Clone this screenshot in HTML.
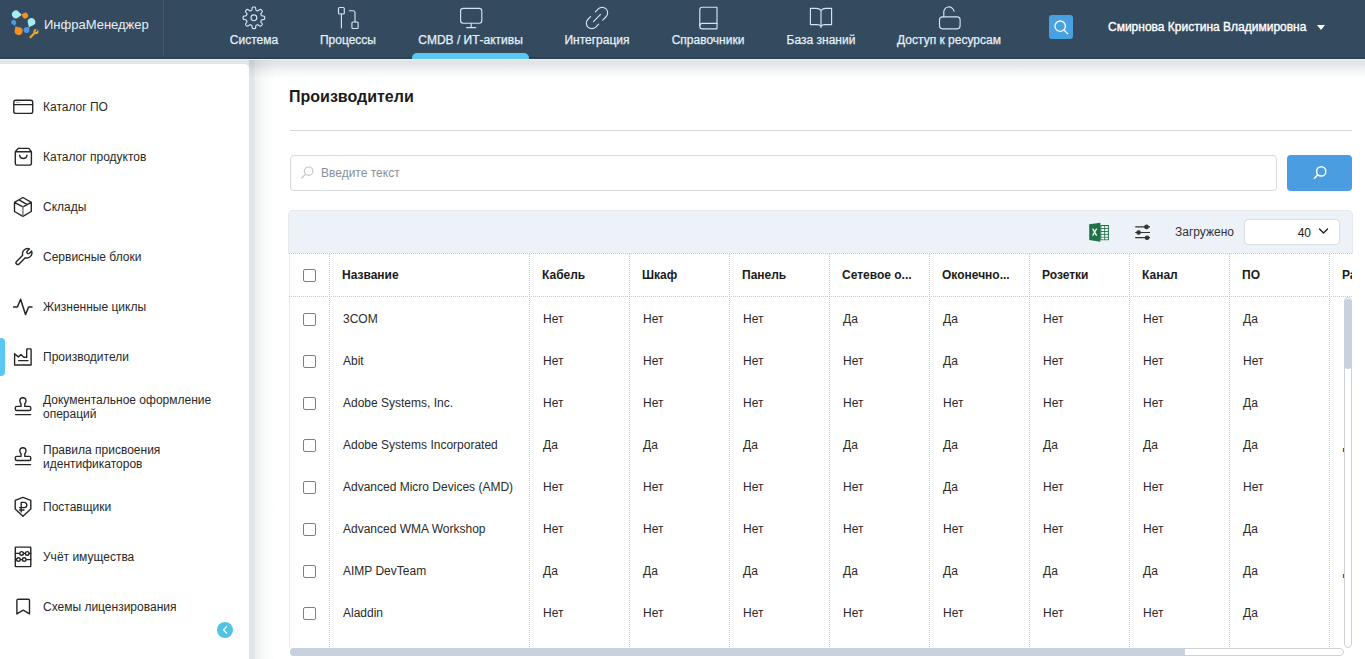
<!DOCTYPE html>
<html><head><meta charset="utf-8">
<style>
*{box-sizing:border-box;margin:0;padding:0}
html,body{width:1365px;height:659px;overflow:hidden}
body{font-family:"Liberation Sans",sans-serif;background:#e1e5e8;position:relative;color:#222}
.hdr{position:absolute;left:0;top:0;width:1365px;height:59px;background:#344a5e}
.hsep{position:absolute;left:163px;top:0;width:1px;height:56px;background:#485c70;box-shadow:1px 0 0 #304457}
.logo-t{position:absolute;left:44px;top:17px;font-size:13px;color:#e6f0f8}
.nav{position:absolute;top:0;height:59px;text-align:center;color:#e3f0fa;font-size:12px;-webkit-text-stroke:0.25px #e3f0fa}
.nav .lbl{position:absolute;left:0;right:0;top:33px;white-space:nowrap}
.nav svg{position:absolute;left:50%;top:6px;transform:translateX(-50%)}
.ul{position:absolute;left:412px;top:53px;width:117px;height:6px;background:#5ac8f2;border-radius:5px 5px 0 0}
.sbtn{position:absolute;left:1049px;top:15px;width:24px;height:24px;background:#4aa1e2;border-radius:3px}
.uname{position:absolute;left:1108px;top:20px;font-size:12px;font-weight:400;color:#fff;-webkit-text-stroke:0.35px #fff;white-space:nowrap}
.caret{position:absolute;left:1317px;top:25px;width:0;height:0;border-left:4px solid transparent;border-right:4px solid transparent;border-top:5px solid #fff}
.side{position:absolute;left:0;top:64px;width:249px;height:600px;background:#fff;border-radius:0 5px 0 0}
.si{position:absolute;left:0;width:249px;height:40px}
.si .t{position:absolute;left:43px;font-size:12px;color:#222;line-height:14px}
.si svg{position:absolute;left:12px}
.act{position:absolute;left:0;top:338px;width:5px;height:38px;background:#5ac8f2;border-radius:0 4px 4px 0}
.st{position:absolute;left:43px;font-size:12px;line-height:14px;color:#292929;white-space:nowrap}
.coll{position:absolute;left:217px;top:622px;width:16px;height:16px;border-radius:50%;background:#50c3e6}
.main{position:absolute;left:249px;top:59px;width:1116px;height:600px;background:#fff}
.gl{position:absolute;left:249px;top:59px;width:26px;height:600px;background:linear-gradient(to right,rgba(20,45,65,.125) 0,rgba(20,45,65,.12) 5px,rgba(20,60,90,.08) 6px,rgba(20,45,65,.07) 8px,rgba(20,45,65,.035) 14px,rgba(20,45,65,0) 26px)}
.gt{position:absolute;left:249px;top:59px;width:1116px;height:20px;background:linear-gradient(rgba(20,45,65,.13) 0,rgba(20,45,65,.12) 5px,rgba(20,45,65,.055) 11px,rgba(20,45,65,0) 19px)}
.gtl{position:absolute;left:0;top:59px;width:1365px;height:1px;background:#e8f1f8}
.gc{position:absolute;left:249px;top:59px;width:24px;height:20px;background:linear-gradient(135deg,#e0e4e7 0,#e6e9eb 40%,rgba(255,255,255,0) 100%)}
.hdb{position:absolute;left:0;top:57px;width:1365px;height:2px;background:#2d3f51}
.title{position:absolute;left:289px;top:88px;font-size:16px;font-weight:700;color:#1b1b1b}
.hr{position:absolute;left:290px;top:130px;width:1062px;height:1px;background:#d3d7dc}
.inp{position:absolute;left:290px;top:155px;width:987px;height:36px;border:1px solid #d6dadf;border-radius:4px;background:#fff}
.ph{position:absolute;left:321px;top:166px;font-size:12px;color:#8a8f96}
.gbtn{position:absolute;left:1287px;top:155px;width:65px;height:36px;background:#4a9de0;border-radius:4px}
.tb{position:absolute;left:288px;top:210px;width:1065px;height:44px;background:#edf2f9;border:1px solid #e5e9ee;border-bottom:none;border-radius:5px 5px 0 0}
.zag{position:absolute;left:1175px;top:225px;font-size:12px;color:#333}
.sel{position:absolute;left:1244px;top:219px;width:96px;height:26px;background:#fff;border:1px solid #d9dee4;border-radius:4px}
.sel span{position:absolute;right:28px;top:6px;font-size:12px;color:#222}
.grid{position:absolute;left:289px;top:253px;width:1063px;height:395px;overflow:hidden;background:#fff;box-shadow:inset 1px 0 0 #e7ebf0}
.hl{position:absolute;left:0;width:1063px;height:0;border-top:1px dotted #c4c8ce}
.vl{position:absolute;top:0;width:0;height:394px;border-left:1px dotted #c4c8ce}
.th,.td{position:absolute;font-size:12px;line-height:14px;white-space:nowrap;color:#2a2a2a}
..hl{position:absolute;left:0;width:1063px;height:0;border-top:1px dotted #c4c8ce}
.vl{position:absolute;top:0;width:0;height:394px;border-left:1px dotted #c4c8ce}
.th,.td{position:absolute;font-size:12px;line-height:14px;white-space:nowrap;color:#2a2a2a}
..hl{position:absolute;left:0;width:1063px;height:0;border-top:1px dotted #c4c8ce}
.vl{position:absolute;top:0;width:0;height:394px;border-left:1px dotted #c4c8ce}
.th,.td{position:absolute;font-size:12px;line-height:14px;white-space:nowrap;color:#2a2a2a}
.th{font-weight:700;color:#1b1b1b}
.cb{position:absolute;width:13px;height:13px;border:1px solid #7c8086;border-radius:2px;background:#fff}
.vs{position:absolute;left:1344px;top:297px;width:8px;height:351px;border:1px solid #cdd2d8;border-radius:4px;background:#fff;z-index:3}
.vs i{position:absolute;left:-1px;top:1px;width:8px;height:70px;background:#c7d2de;border-radius:4px}
.hs{position:absolute;left:290px;top:648px;width:1054px;height:8px;border:1px solid #cdd2d8;border-radius:4px;background:#fff;z-index:3}
.hs i{position:absolute;left:-1px;top:-1px;width:895px;height:8px;background:#c7d2de;border-radius:4px 0 0 4px}
.ov{position:absolute;left:0;top:0;z-index:5}
</style></head><body>
<div class="hdr"></div>
<div class="hsep"></div><div class="hdb"></div>
<div class="logo-t">ИнфраМенеджер</div>

<div class="nav" style="left:214px;width:80px"><div class="lbl">Система</div></div>
<div class="nav" style="left:303px;width:90px"><div class="lbl">Процессы</div></div>
<div class="nav" style="left:412px;width:117px"><div class="lbl">CMDB / ИТ-активы</div></div>
<div class="nav" style="left:547px;width:100px"><div class="lbl">Интеграция</div></div>
<div class="nav" style="left:658px;width:100px"><div class="lbl">Справочники</div></div>
<div class="nav" style="left:771px;width:100px"><div class="lbl">База знаний</div></div>
<div class="nav" style="left:884px;width:130px"><div class="lbl">Доступ к ресурсам</div></div>
<div class="ul"></div>
<div class="sbtn"></div>
<div class="uname">Смирнова Кристина Владимировна</div>
<div class="caret"></div>

<div class="main"></div><div class="gt"></div><div class="gl"></div><div class="gtl"></div>
<div class="side"></div>
<div class="act"></div>
<div class="coll"></div>
<div class="st" style="top:100px">Каталог ПО</div>
<div class="st" style="top:150px">Каталог продуктов</div>
<div class="st" style="top:200px">Склады</div>
<div class="st" style="top:250px">Сервисные блоки</div>
<div class="st" style="top:300px">Жизненные циклы</div>
<div class="st" style="top:350px">Производители</div>
<div class="st" style="top:393px">Документальное оформление<br>операций</div>
<div class="st" style="top:443px">Правила присвоения<br>идентификаторов</div>
<div class="st" style="top:500px">Поставщики</div>
<div class="st" style="top:550px">Учёт имущества</div>
<div class="st" style="top:600px">Схемы лицензирования</div>

<div class="title">Производители</div>
<div class="hr"></div>
<div class="inp"></div>
<div class="ph">Введите текст</div>
<div class="gbtn"></div>
<div class="tb"></div>
<div class="zag">Загружено</div>
<div class="sel"><span>40</span></div>
<div class="grid" id="grid">
<div class="hl" style="top:0"></div><div class="hl" style="top:43px"></div>
<div class="vl" style="left:40px"></div>
<div class="vl" style="left:240px"></div>
<div class="vl" style="left:340px"></div>
<div class="vl" style="left:440px"></div>
<div class="vl" style="left:540px"></div>
<div class="vl" style="left:640px"></div>
<div class="vl" style="left:740px"></div>
<div class="vl" style="left:840px"></div>
<div class="vl" style="left:940px"></div>
<div class="vl" style="left:1040px"></div>
<span class="cb" style="left:14px;top:16px"></span>
<div class="th" style="left:53px;top:15px">Название</div>
<div class="th" style="left:253px;top:15px">Кабель</div>
<div class="th" style="left:353px;top:15px">Шкаф</div>
<div class="th" style="left:453px;top:15px">Панель</div>
<div class="th" style="left:553px;top:15px">Сетевое о...</div>
<div class="th" style="left:653px;top:15px">Оконечно...</div>
<div class="th" style="left:753px;top:15px">Розетки</div>
<div class="th" style="left:853px;top:15px">Канал</div>
<div class="th" style="left:953px;top:15px">ПО</div>
<div class="th" style="left:1053px;top:15px">Ра</div>
<span class="cb" style="left:14px;top:60px"></span>
<div class="td" style="left:54px;top:59px">3COM</div>
<div class="td" style="left:254px;top:59px">Нет</div>
<div class="td" style="left:354px;top:59px">Нет</div>
<div class="td" style="left:454px;top:59px">Нет</div>
<div class="td" style="left:554px;top:59px">Да</div>
<div class="td" style="left:654px;top:59px">Да</div>
<div class="td" style="left:754px;top:59px">Нет</div>
<div class="td" style="left:854px;top:59px">Нет</div>
<div class="td" style="left:954px;top:59px">Да</div>
<div class="td" style="left:1054px;top:59px"></div>
<span class="cb" style="left:14px;top:102px"></span>
<div class="td" style="left:54px;top:101px">Abit</div>
<div class="td" style="left:254px;top:101px">Нет</div>
<div class="td" style="left:354px;top:101px">Нет</div>
<div class="td" style="left:454px;top:101px">Нет</div>
<div class="td" style="left:554px;top:101px">Нет</div>
<div class="td" style="left:654px;top:101px">Да</div>
<div class="td" style="left:754px;top:101px">Нет</div>
<div class="td" style="left:854px;top:101px">Нет</div>
<div class="td" style="left:954px;top:101px">Нет</div>
<div class="td" style="left:1054px;top:101px"></div>
<span class="cb" style="left:14px;top:144px"></span>
<div class="td" style="left:54px;top:143px">Adobe Systems, Inc.</div>
<div class="td" style="left:254px;top:143px">Нет</div>
<div class="td" style="left:354px;top:143px">Нет</div>
<div class="td" style="left:454px;top:143px">Нет</div>
<div class="td" style="left:554px;top:143px">Нет</div>
<div class="td" style="left:654px;top:143px">Нет</div>
<div class="td" style="left:754px;top:143px">Нет</div>
<div class="td" style="left:854px;top:143px">Нет</div>
<div class="td" style="left:954px;top:143px">Да</div>
<div class="td" style="left:1054px;top:143px"></div>
<span class="cb" style="left:14px;top:186px"></span>
<div class="td" style="left:54px;top:185px">Adobe Systems Incorporated</div>
<div class="td" style="left:254px;top:185px">Да</div>
<div class="td" style="left:354px;top:185px">Да</div>
<div class="td" style="left:454px;top:185px">Да</div>
<div class="td" style="left:554px;top:185px">Да</div>
<div class="td" style="left:654px;top:185px">Да</div>
<div class="td" style="left:754px;top:185px">Да</div>
<div class="td" style="left:854px;top:185px">Да</div>
<div class="td" style="left:954px;top:185px">Да</div>
<div class="td" style="left:1054px;top:185px">Да</div>
<span class="cb" style="left:14px;top:228px"></span>
<div class="td" style="left:54px;top:227px">Advanced Micro Devices (AMD)</div>
<div class="td" style="left:254px;top:227px">Нет</div>
<div class="td" style="left:354px;top:227px">Нет</div>
<div class="td" style="left:454px;top:227px">Нет</div>
<div class="td" style="left:554px;top:227px">Нет</div>
<div class="td" style="left:654px;top:227px">Да</div>
<div class="td" style="left:754px;top:227px">Нет</div>
<div class="td" style="left:854px;top:227px">Нет</div>
<div class="td" style="left:954px;top:227px">Нет</div>
<div class="td" style="left:1054px;top:227px"></div>
<span class="cb" style="left:14px;top:270px"></span>
<div class="td" style="left:54px;top:269px">Advanced WMA Workshop</div>
<div class="td" style="left:254px;top:269px">Нет</div>
<div class="td" style="left:354px;top:269px">Нет</div>
<div class="td" style="left:454px;top:269px">Нет</div>
<div class="td" style="left:554px;top:269px">Нет</div>
<div class="td" style="left:654px;top:269px">Нет</div>
<div class="td" style="left:754px;top:269px">Нет</div>
<div class="td" style="left:854px;top:269px">Нет</div>
<div class="td" style="left:954px;top:269px">Да</div>
<div class="td" style="left:1054px;top:269px"></div>
<span class="cb" style="left:14px;top:312px"></span>
<div class="td" style="left:54px;top:311px">AIMP DevTeam</div>
<div class="td" style="left:254px;top:311px">Да</div>
<div class="td" style="left:354px;top:311px">Да</div>
<div class="td" style="left:454px;top:311px">Да</div>
<div class="td" style="left:554px;top:311px">Да</div>
<div class="td" style="left:654px;top:311px">Да</div>
<div class="td" style="left:754px;top:311px">Да</div>
<div class="td" style="left:854px;top:311px">Да</div>
<div class="td" style="left:954px;top:311px">Да</div>
<div class="td" style="left:1054px;top:311px">Да</div>
<span class="cb" style="left:14px;top:354px"></span>
<div class="td" style="left:54px;top:353px">Aladdin</div>
<div class="td" style="left:254px;top:353px">Нет</div>
<div class="td" style="left:354px;top:353px">Нет</div>
<div class="td" style="left:454px;top:353px">Нет</div>
<div class="td" style="left:554px;top:353px">Нет</div>
<div class="td" style="left:654px;top:353px">Нет</div>
<div class="td" style="left:754px;top:353px">Нет</div>
<div class="td" style="left:854px;top:353px">Нет</div>
<div class="td" style="left:954px;top:353px">Да</div>
<div class="td" style="left:1054px;top:353px"></div>
</div>
<div class="vs"><i></i></div>
<div class="hs"><i></i></div>
<svg class="ov" width="1365" height="659" viewBox="0 0 1365 659">
<g fill="none" stroke="#d3e4f2" stroke-width="1.15" stroke-linecap="round" stroke-linejoin="round">
<path d="M253.90 6.95 L254.11 6.95 L254.33 6.97 L254.54 6.99 L254.75 7.03 L254.95 7.10 L255.15 7.21 L255.34 7.39 L255.50 7.69 L255.63 8.13 L255.71 8.68 L255.78 9.23 L255.85 9.67 L255.94 9.97 L256.05 10.16 L256.18 10.29 L256.31 10.38 L256.45 10.46 L256.59 10.52 L256.73 10.58 L256.87 10.64 L257.01 10.70 L257.15 10.75 L257.29 10.81 L257.44 10.85 L257.60 10.88 L257.78 10.88 L257.99 10.82 L258.27 10.67 L258.63 10.41 L259.07 10.07 L259.52 9.74 L259.92 9.52 L260.24 9.42 L260.50 9.42 L260.72 9.49 L260.91 9.59 L261.09 9.71 L261.26 9.84 L261.42 9.98 L261.57 10.13 L261.72 10.28 L261.86 10.44 L261.99 10.61 L262.11 10.79 L262.21 10.98 L262.28 11.20 L262.28 11.46 L262.18 11.78 L261.96 12.18 L261.63 12.63 L261.29 13.07 L261.03 13.43 L260.88 13.71 L260.82 13.92 L260.82 14.10 L260.85 14.26 L260.89 14.41 L260.95 14.55 L261.00 14.69 L261.06 14.83 L261.12 14.97 L261.18 15.11 L261.24 15.25 L261.32 15.39 L261.41 15.52 L261.54 15.65 L261.73 15.76 L262.03 15.85 L262.47 15.92 L263.02 15.99 L263.57 16.07 L264.01 16.20 L264.31 16.36 L264.49 16.55 L264.60 16.75 L264.67 16.95 L264.71 17.16 L264.73 17.37 L264.75 17.59 L264.75 17.80 L264.75 18.01 L264.73 18.23 L264.71 18.44 L264.67 18.65 L264.60 18.85 L264.49 19.05 L264.31 19.24 L264.01 19.40 L263.57 19.53 L263.02 19.61 L262.47 19.68 L262.03 19.75 L261.73 19.84 L261.54 19.95 L261.41 20.08 L261.32 20.21 L261.24 20.35 L261.18 20.49 L261.12 20.63 L261.06 20.77 L261.00 20.91 L260.95 21.05 L260.89 21.19 L260.85 21.34 L260.82 21.50 L260.82 21.68 L260.88 21.89 L261.03 22.17 L261.29 22.53 L261.63 22.97 L261.96 23.42 L262.18 23.82 L262.28 24.14 L262.28 24.40 L262.21 24.62 L262.11 24.81 L261.99 24.99 L261.86 25.16 L261.72 25.32 L261.57 25.47 L261.42 25.62 L261.26 25.76 L261.09 25.89 L260.91 26.01 L260.72 26.11 L260.50 26.18 L260.24 26.18 L259.92 26.08 L259.52 25.86 L259.07 25.53 L258.63 25.19 L258.27 24.93 L257.99 24.78 L257.78 24.72 L257.60 24.72 L257.44 24.75 L257.29 24.79 L257.15 24.85 L257.01 24.90 L256.87 24.96 L256.73 25.02 L256.59 25.08 L256.45 25.14 L256.31 25.22 L256.18 25.31 L256.05 25.44 L255.94 25.63 L255.85 25.93 L255.78 26.37 L255.71 26.92 L255.63 27.47 L255.50 27.91 L255.34 28.21 L255.15 28.39 L254.95 28.50 L254.75 28.57 L254.54 28.61 L254.33 28.63 L254.11 28.65 L253.90 28.65 L253.69 28.65 L253.47 28.63 L253.26 28.61 L253.05 28.57 L252.85 28.50 L252.65 28.39 L252.46 28.21 L252.30 27.91 L252.17 27.47 L252.09 26.92 L252.02 26.37 L251.95 25.93 L251.86 25.63 L251.75 25.44 L251.62 25.31 L251.49 25.22 L251.35 25.14 L251.21 25.08 L251.07 25.02 L250.93 24.96 L250.79 24.90 L250.65 24.85 L250.51 24.79 L250.36 24.75 L250.20 24.72 L250.02 24.72 L249.81 24.78 L249.53 24.93 L249.17 25.19 L248.73 25.53 L248.28 25.86 L247.88 26.08 L247.56 26.18 L247.30 26.18 L247.08 26.11 L246.89 26.01 L246.71 25.89 L246.54 25.76 L246.38 25.62 L246.23 25.47 L246.08 25.32 L245.94 25.16 L245.81 24.99 L245.69 24.81 L245.59 24.62 L245.52 24.40 L245.52 24.14 L245.62 23.82 L245.84 23.42 L246.17 22.97 L246.51 22.53 L246.77 22.17 L246.92 21.89 L246.98 21.68 L246.98 21.50 L246.95 21.34 L246.91 21.19 L246.85 21.05 L246.80 20.91 L246.74 20.77 L246.68 20.63 L246.62 20.49 L246.56 20.35 L246.48 20.21 L246.39 20.08 L246.26 19.95 L246.07 19.84 L245.77 19.75 L245.33 19.68 L244.78 19.61 L244.23 19.53 L243.79 19.40 L243.49 19.24 L243.31 19.05 L243.20 18.85 L243.13 18.65 L243.09 18.44 L243.07 18.23 L243.05 18.01 L243.05 17.80 L243.05 17.59 L243.07 17.37 L243.09 17.16 L243.13 16.95 L243.20 16.75 L243.31 16.55 L243.49 16.36 L243.79 16.20 L244.23 16.07 L244.78 15.99 L245.33 15.92 L245.77 15.85 L246.07 15.76 L246.26 15.65 L246.39 15.52 L246.48 15.39 L246.56 15.25 L246.62 15.11 L246.68 14.97 L246.74 14.83 L246.80 14.69 L246.85 14.55 L246.91 14.41 L246.95 14.26 L246.98 14.10 L246.98 13.92 L246.92 13.71 L246.77 13.43 L246.51 13.07 L246.17 12.63 L245.84 12.18 L245.62 11.78 L245.52 11.46 L245.52 11.20 L245.59 10.98 L245.69 10.79 L245.81 10.61 L245.94 10.44 L246.08 10.28 L246.23 10.13 L246.38 9.98 L246.54 9.84 L246.71 9.71 L246.89 9.59 L247.08 9.49 L247.30 9.42 L247.56 9.42 L247.88 9.52 L248.28 9.74 L248.73 10.07 L249.17 10.41 L249.53 10.67 L249.81 10.82 L250.02 10.88 L250.20 10.88 L250.36 10.85 L250.51 10.81 L250.65 10.75 L250.79 10.70 L250.93 10.64 L251.07 10.58 L251.21 10.52 L251.35 10.46 L251.49 10.38 L251.62 10.29 L251.75 10.16 L251.86 9.97 L251.95 9.67 L252.02 9.23 L252.09 8.68 L252.17 8.13 L252.30 7.69 L252.46 7.39 L252.65 7.21 L252.85 7.10 L253.05 7.03 L253.26 6.99 L253.47 6.97 L253.69 6.95Z"/>
<circle cx="253.9" cy="17.8" r="2.9"/>
<rect x="338.5" y="7.5" width="5.8" height="6.5" rx="1"/>
<path d="M341.4 14 V28"/>
<path d="M349.3 10.7 H353 Q355 10.7 355 12.7 V22"/>
<rect x="351.9" y="22" width="6.2" height="6.5" rx="1"/>
<rect x="460.6" y="8.4" width="21.2" height="14.8" rx="2.6"/>
<path d="M471.2 23.2 V27.4 M466.6 27.6 H475.8"/>
<g transform="translate(597 18) rotate(45)"><path d="M-5.5 -3.2 V-7.3 A5.5 5.5 0 0 1 5.5 -7.3 V-2.6"/><path d="M-5.5 3.6 V7.3 A5.5 5.5 0 0 0 5.5 7.3 V3.2"/><path d="M0 -5 V5"/></g>
<path d="M717 7.2 H702.2 Q699.8 7.2 699.8 9.6 V26.4 Q699.8 28.8 702.2 28.8 H717 Z"/>
<path d="M699.8 25.8 Q699.8 23.4 702.2 23.4 H717"/>
<path d="M821 10.4 Q819.2 8.3 816.3 8.3 H810.4 V24.6 H817.4 Q819.8 24.6 821 26.3 Q822.2 24.6 824.6 24.6 H831.6 V8.3 H825.7 Q822.8 8.3 821 10.4 V27.6"/>
<rect x="939.5" y="16.8" width="20.6" height="12" rx="3"/>
<path d="M943.8 16.8 V13 A5.2 5.2 0 0 1 954.1 11.3"/>
</g>
<g fill="none" stroke="#ffffff" stroke-width="1.3" stroke-linecap="round">
<circle cx="1060.2" cy="26.2" r="5.2"/>
<path d="M1064 30 L1067.6 33.6"/>
</g>
<!-- logo -->
<g>
<path d="M21.80 14.80 L18.27 17.50 A3.9 3.9 0 1 1 18.66 11.65 Z" fill="#a6ecf5"/>
<path d="M21.60 14.60 L23.52 13.24 A2.9 2.9 0 1 1 22.54 16.76 Z" fill="#f5901e"/>
<path d="M29.00 27.20 L27.83 22.89 A3.8 3.8 0 1 1 33.07 25.36 Z" fill="#a6ecf5"/>
<path d="M15.20 25.80 L12.61 24.55 A2.5 2.5 0 1 1 16.08 23.07 Z" fill="#4e98e4"/>
<path d="M15.40 26.40 L19.37 27.17 A4.0 4.0 0 1 1 14.67 30.37 Z" fill="#f5901e"/>
<path d="M29.20 26.80 L29.39 29.92 A2.9 2.9 0 1 1 26.10 27.23 Z" fill="#4e98e4"/>
<path d="M30.4 37.2 L34.6 33" stroke="#eca13a" stroke-width="2.2" stroke-linecap="round"/><circle cx="36" cy="31.6" r="2.6" fill="#eca13a"/><path d="M37.4 29.2 L36.2 31.4" stroke="#344a5e" stroke-width="1.3" stroke-linecap="round"/>
</g>
<!-- sidebar icons -->
<g fill="none" stroke="#262626" stroke-width="1.4" stroke-linecap="round" stroke-linejoin="round">
<rect x="13.8" y="100.3" width="18.9" height="13.1" rx="2"/>
<path d="M13.8 104.6 H32.7"/>
<path d="M16.2 102.4 H19.8" stroke="#9a9a9a" stroke-width="0.8"/>
<path d="M18.2 148.4 H28.8 L31.4 151.8 V163.6 Q31.4 165.1 29.9 165.1 H16.8 Q15.3 165.1 15.3 163.6 V151.8 Z M15.3 151.8 H31.4"/>
<path d="M19.6 155.2 Q20.1 158.5 23.3 158.5 Q26.5 158.5 27 155.2"/>
<path d="M22.9 197.5 L31.3 202.3 V211.5 L22.9 216.3 L14.5 211.5 V202.3 Z M14.5 202.3 L22.9 206.8 L31.3 202.3 M19 199.9 L27.2 204.6"/>
<path d="M22.9 206.8 V216" stroke="#777"/>
<g transform="translate(27 253.5) rotate(45)"><path d="M1.8 4.3 A5.2 5.2 0 0 0 1.5 -4.98 V-2 A1.5 1.5 0 0 1 -1.5 -2 V-4.98 A5.2 5.2 0 0 0 -1.8 4.3 V13 A1.8 1.8 0 0 0 1.8 13 Z"/></g>
<path d="M13.6 307 H17.4 L20.6 299.3 L25.5 314.6 L28.6 307 H32" stroke-width="1.5"/>
<path d="M14.6 365 V353.8 L18.3 356.9 L21 354.6 L23.8 357.2 H26.7 V349.4 Q26.7 348.9 27.2 348.9 H30.6 Q31.1 348.9 31.1 349.4 V365 Z"/>
<path d="M18.6 360.6 H28"/>
<path d="M21 406.4 V403.8 Q19.8 402.4 19.8 400.8 A3.1 3.1 0 0 1 26 400.8 Q26 402.4 24.8 403.8 V406.4 H29.3 Q30.8 406.4 30.8 407.9 V409 Q30.8 410.5 29.3 410.5 H16.8 Q15.3 410.5 15.3 409 V407.9 Q15.3 406.4 16.8 406.4 Z"/>
<path d="M15.5 414.6 H30.6"/>
<path d="M21 456.4 V453.8 Q19.8 452.4 19.8 450.8 A3.1 3.1 0 0 1 26 450.8 Q26 452.4 24.8 453.8 V456.4 H29.3 Q30.8 456.4 30.8 457.9 V459 Q30.8 460.5 29.3 460.5 H16.8 Q15.3 460.5 15.3 459 V457.9 Q15.3 456.4 16.8 456.4 Z"/>
<path d="M15.5 464.6 H30.6"/>
<path d="M22.9 497.4 L30.8 500.4 V509 L22.9 516.3 L15.2 509 V500.4 Z"/>
<path d="M21.2 512 V502.4 H24.2 A2.6 2.6 0 0 1 24.2 507.6 H19.6 M19.6 510 H24"/>
<rect x="15.3" y="547.1" width="15.5" height="19.5" rx="0.5"/>
<path d="M15.3 553.4 H30.8 M15.3 559.6 H30.8"/>
<g fill="#fff"><circle cx="21.6" cy="553.4" r="1.8"/><circle cx="27.2" cy="553.4" r="1.8"/><circle cx="18.4" cy="559.6" r="1.8"/><circle cx="24.2" cy="559.6" r="1.8"/></g>
<path d="M16.9 613.9 V600.6 Q16.9 599.3 18.2 599.3 H28.2 Q29.5 599.3 29.5 600.6 V613.9 L23.2 610.2 Z"/>
</g>
<!-- collapse chevron -->
<path d="M226.6 626.6 L223.4 629.8 L226.6 633" fill="none" stroke="#fff" stroke-width="1.2" stroke-linecap="round" stroke-linejoin="round"/>
<!-- input search icon -->
<g fill="none" stroke="#c3c8ce" stroke-width="1.2" stroke-linecap="round"><circle cx="308.6" cy="171.2" r="4.2"/><path d="M305.6 174.2 L301.8 178"/></g>
<!-- go search icon -->
<g fill="none" stroke="#fff" stroke-width="1.5" stroke-linecap="round"><circle cx="1321.2" cy="171.4" r="4.6"/><path d="M1317.8 174.8 L1314.4 178.2"/></g>
<!-- excel -->
<g>
<path d="M1089.2 224.2 L1100.4 222.8 V241.8 L1089.2 240 Z" fill="#1f7346"/>
<rect x="1100.3" y="225" width="8.6" height="15.2" fill="#1f7346"/>
<g fill="#fff"><rect x="1101.3" y="226.1" width="3" height="2"/><rect x="1105.2" y="226.1" width="2.7" height="2"/>
<rect x="1101.3" y="229" width="3" height="2"/><rect x="1105.2" y="229" width="2.7" height="2"/>
<rect x="1101.3" y="231.9" width="3" height="2"/><rect x="1105.2" y="231.9" width="2.7" height="2"/>
<rect x="1101.3" y="234.8" width="3" height="2"/><rect x="1105.2" y="234.8" width="2.7" height="2"/>
<rect x="1101.3" y="237.6" width="3" height="1.8"/><rect x="1105.2" y="237.6" width="2.7" height="1.8"/></g>
<path d="M1092.6 228.6 L1096.6 235.6 M1096.6 228.6 L1092.6 235.6" stroke="#fff" stroke-width="1.3"/>
</g>
<!-- sliders -->
<g stroke="#333" stroke-width="1.2" fill="#333">
<path d="M1135.2 226.9 H1150 M1135.2 232.5 H1150 M1135.2 237.7 H1150"/>
<circle cx="1146.5" cy="226.9" r="1.7"/><circle cx="1138.6" cy="232.5" r="1.7"/><circle cx="1147" cy="237.7" r="1.7"/>
</g>
<!-- select chevron -->
<path d="M1319.5 229 L1323.5 233 L1327.5 229" fill="none" stroke="#222" stroke-width="1.4" stroke-linecap="round" stroke-linejoin="round"/>
</svg>
</body></html>
